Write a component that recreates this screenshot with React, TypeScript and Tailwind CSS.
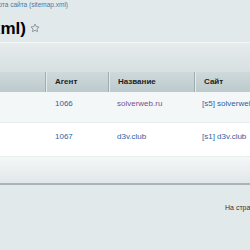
import React from "react";

const rows = [
  { id: "1066", name: "solverweb.ru", site: "[s5] solverweb.ru", visited: true, bg: "bg-[#f4f7f8]", h: "h-[31px]", pt: "pt-[7px]" },
  { id: "1067", name: "d3v.club", site: "[s1] d3v.club", visited: false, bg: "bg-white", h: "h-[34px]", pt: "pt-[9px]" },
];

function Star() {
  return (
    <svg width="10" height="10" viewBox="0 0 24 24" fill="none" stroke="#7d8a8e" strokeWidth="2" strokeLinejoin="round">
      <path d="M12 2.5l2.9 6.2 6.8.8-5 4.6 1.3 6.7L12 17.5l-6 3.3 1.3-6.7-5-4.6 6.8-.8z" />
    </svg>
  );
}

export default function App() {
  return (
    <div className="w-[250px] h-[250px] overflow-hidden bg-[#e2e9eb] font-['Liberation_Sans',Arial,sans-serif]">
      {/* breadcrumb, cut at the left edge */}
      <div className="h-[10px] pt-[1px]">
        <div className="w-[68px] flex justify-end overflow-hidden whitespace-nowrap text-[6.5px] leading-[8px] text-[#4d78a0]">
          Карта сайта (sitemap.xml)
        </div>
      </div>

      {/* title */}
      <div className="h-[32px] flex items-center gap-[4px] pt-[4px]">
        <div className="w-[26px] flex justify-end overflow-hidden whitespace-nowrap text-[17px] font-bold leading-[19px] text-black">
          Карта сайта (sitemap.xml)
        </div>
        <Star />
      </div>

      {/* toolbar panel */}
      <div className="border-t border-[#f4f7f7] h-[30px] bg-gradient-to-b from-[#e7eced] to-[#d6dfe1]" />

      {/* header */}
      <div className="grid grid-cols-[45px_63px_86px_1fr] h-[20px] bg-gradient-to-b from-[#cfd9db] to-[#bccacd] text-[8px] font-bold text-[#1e1e1e]">
        <div />
        {["Агент", "Название", "Сайт"].map((t) => (
          <div key={t} className="flex items-center pl-[9px] border-l border-[#9fadb1] shadow-[inset_1px_0_0_#e3eaeb] whitespace-nowrap">
            {t}
          </div>
        ))}
      </div>

      {/* rows */}
      {rows.map((r) => (
        <div key={r.id} className={`grid grid-cols-[45px_63px_86px_1fr] ${r.h} ${r.bg} border-b border-[#e8edee] text-[8px] leading-[10px] whitespace-nowrap`}>
          <div />
          <div className={`${r.pt} pl-[10px] text-[#2d5fa3]`}>{r.id}</div>
          <div className={`${r.pt} pl-[9px] ${r.visited ? "text-[#7e4f8a]" : "text-[#2d5fa3]"}`}>{r.name}</div>
          <div className={`${r.pt} pl-[8px] text-[#2d5fa3] overflow-hidden`}>{r.site}</div>
        </div>
      ))}

      {/* footer */}
      <div className="h-[28px] bg-gradient-to-b from-[#f5f7f8] to-[#e1e7e9] border-b-2 border-[#a8b4b7]" />

      <div className="flex justify-end pt-[18px]">
        <div className="w-[25px] overflow-hidden whitespace-nowrap text-[7px] leading-[9px] text-[#333]">
          На странице: 20
        </div>
      </div>
    </div>
  );
}
